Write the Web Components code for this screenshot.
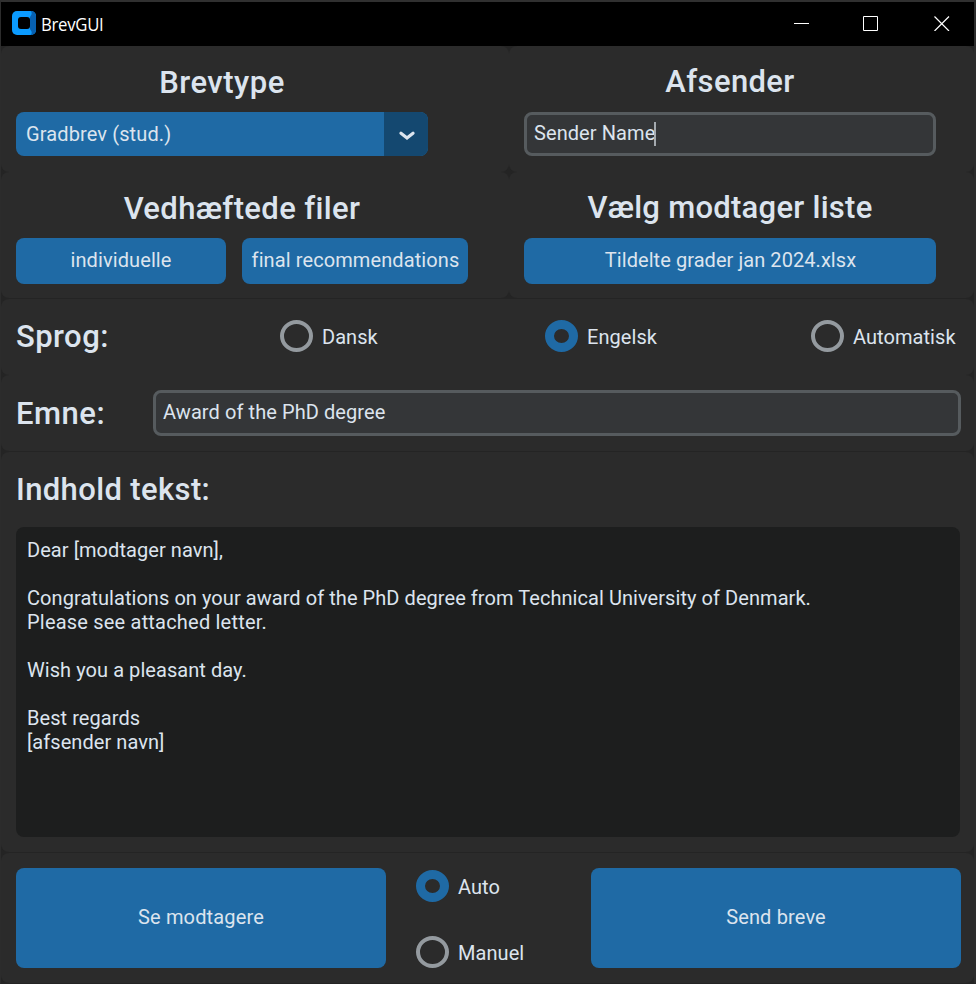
<!DOCTYPE html>
<html lang="da">
<head>
<meta charset="utf-8">
<title>BrevGUI</title>
<style>
html,body{margin:0;height:100%;background:#242424}
body{font-family:Roboto,"Liberation Sans",sans-serif;font-size:20px;line-height:24px;letter-spacing:.06px;color:#dce4ee;overflow:hidden}
.pair{display:grid;grid-template-columns:508px 465px}
.stack{display:flex;flex-direction:column;align-items:center;width:412px}
.files{display:grid;grid-template-columns:210px 226px;column-gap:16px}
</style>
</head>
<body>
<app-window>
  <title-bar slot="title">BrevGUI</title-bar>
  <div class="pair">
    <form-panel style="height:126px;--pad:17px 15px 0">
      <div class="stack">
        <form-heading style="--h:49px;--y:2px;--track:.5px">Brevtype</form-heading>
        <option-menu>Gradbrev (stud.)</option-menu>
      </div>
    </form-panel>
    <form-panel style="height:126px;--pad:17px 15px 0">
      <div class="stack">
        <form-heading style="--h:49px;--y:1px">Afsender</form-heading>
        <text-entry caret style="width:412px;height:44px">Sender Name</text-entry>
      </div>
    </form-panel>
    <form-panel style="height:126px;--pad:17px 15px 0">
      <div class="stack" style="width:452px">
        <form-heading style="--h:49px;--y:2px">Vedhæftede filer</form-heading>
        <div class="files">
          <push-button style="height:46px;--track:.1px">individuelle</push-button>
          <push-button style="height:46px;--track:.1px;padding-left:1px">final recommendations</push-button>
        </div>
      </div>
    </form-panel>
    <form-panel style="height:126px;--pad:17px 15px 0">
      <div class="stack">
        <form-heading style="--h:49px;--y:1px;--track:.27px">Vælg modtager liste</form-heading>
        <push-button style="width:412px;height:46px;padding-left:1px">Tildelte grader jan 2024.xlsx</push-button>
      </div>
    </form-panel>
  </div>
  <form-panel style="height:76px;margin-top:1px;--pad:0 15px 2px;--cols:264px 265px 266px auto;--align:center">
    <form-heading style="--track:.45px;--y:1px">Sprog:</form-heading>
    <radio-option>Dansk</radio-option>
    <radio-option checked>Engelsk</radio-option>
    <radio-option>Automatisk</radio-option>
  </form-panel>
  <form-panel style="height:76px;--pad:0 14px 0 15px;--cols:137px 808px;--align:center">
    <form-heading style="--track:.5px;--y:1px">Emne:</form-heading>
    <text-entry style="height:46px">Award of the PhD degree</text-entry>
  </form-panel>
  <form-panel style="height:400px;margin-top:1px;--pad:0 15px">
    <form-heading style="--h:75px;--v:center">Indhold tekst:</form-heading>
    <text-area>Dear [modtager navn],

Congratulations on your award of the PhD degree from Technical University of Denmark.
<span style="letter-spacing:.2px">Please see attached letter.</span>

Wish you a pleasant day.

Best regards
[afsender navn]</text-area>
  </form-panel>
  <form-panel style="height:130px;margin-top:1px;--pad:15px 14px 15px 15px;--cols:400px 175px 370px">
    <push-button style="width:370px;height:100px;--track:.15px">Se modtagere</push-button>
    <div style="display:flex;flex-direction:column;gap:34px;padding-top:2px">
      <radio-option checked>Auto</radio-option>
      <radio-option>Manuel</radio-option>
    </div>
    <push-button style="height:100px;--track:.15px">Send breve</push-button>
  </form-panel>
</app-window>
<script>
const define = (name, html) => customElements.define(name, class extends HTMLElement {
  constructor() {
    super();
    this.attachShadow({ mode: 'open' }).innerHTML = html;
  }
});

define('app-window', `<style>
:host{display:block;box-sizing:border-box;width:976px;height:984px;border-style:solid;border-width:2px 2px 1px 1px;border-color:#303030 #2c2c2c #242424 #2c2c2c;background:#242424}
</style><slot name="title"></slot><slot></slot>`);

define('title-bar', `<style>
:host{display:flex;align-items:center;height:44px;background:#000;color:#fff;font:18px/24px "Open Sans","Noto Sans",sans-serif}
.logo{margin:0 5px 2px 11px}
.name{flex:1;letter-spacing:-.3px;padding-bottom:1px;transform-origin:0 50%;transform:scaleX(.93)}
.controls{display:flex;margin:0 24px 3px 0}
.controls svg+svg{margin-left:53px}
.controls svg+svg+svg{margin-left:55px}
svg{display:block}
</style>
<svg class="logo" width="24" height="24" viewBox="0 0 24 24"><rect width="24" height="24" rx="5" fill="#0b9bff"/><path d="M18.500 0h.5a5 5 0 0 1 5 5v14a5 5 0 0 1-5 5h-.5c1-1 1.500-2 1-3.500L18 18V6l1.500-2.500c.5-1.500 0-2.500-1-3.500z" fill="#0760b0"/><rect x="6" y="6" width="12" height="12" rx="3"/></svg>
<span class="name"><slot></slot></span>
<div class="controls">
<svg width="16" height="16" viewBox="0 0 16 16"><path d="M0 8.500h15" stroke="#fff"/></svg>
<svg width="16" height="16" viewBox="0 0 16 16"><path d="M.5 1.500h14v14H.5z" fill="none" stroke="#fff"/></svg>
<svg width="16" height="16" viewBox="0 0 16 16"><path d="M.5 1.500l14.500 14.500M15 1.500L.5 16" stroke="#fff" stroke-width="1.200"/></svg>
</div>`);

define('form-panel', `<style>
:host{display:grid;box-sizing:border-box;border-radius:8px;background:#2b2b2b;padding:var(--pad);grid-template-columns:var(--cols,auto);align-items:var(--align,start);align-content:var(--align,start)}
</style><slot></slot>`);

define('form-heading', `<style>
:host{display:flex;height:var(--h,auto);font-size:31px;line-height:36px;font-weight:500;letter-spacing:var(--track,.37px);white-space:nowrap}
span{margin-top:var(--y,0);align-self:var(--v,flex-start)}
</style><span><slot></slot></span>`);

define('push-button', `<style>
:host{display:flex;align-items:center;justify-content:center;box-sizing:border-box;border-radius:8px;background:#1f6aa5;padding-bottom:2px;white-space:nowrap;letter-spacing:var(--track,.06px)}
</style><slot></slot>`);

define('option-menu', `<style>
:host{display:grid;grid-template-columns:368px 44px;width:412px;height:44px;border-radius:8px;overflow:hidden;background:#1f6aa5}
.value{padding:10px 0 0 10px;letter-spacing:.12px}
.arrow{display:grid;place-items:center;background:#144870}
svg{margin:3px 0 0 1px}
</style><div class="value"><slot></slot></div>
<div class="arrow"><svg width="16" height="10" viewBox="0 0 16 10"><path d="M2 2.300l6 4.700 6-4.700" fill="none" stroke="#dce4ee" stroke-width="3.200" stroke-linecap="round" stroke-linejoin="miter"/></svg></div>`);

define('text-entry', `<style>
:host{display:flex;align-items:center;box-sizing:border-box;border:3px solid #565b5e;border-radius:8px;background:#343638;padding:0 7px 2px;white-space:nowrap;letter-spacing:.08px}
i{display:none;width:2px;height:24px;background:#a4aaaf;margin:1px 0 0 -1px}
:host([caret]) i{display:block}
</style><span><slot></slot></span><i></i>`);

define('radio-option', `<style>
:host{display:flex;align-items:center;gap:9px;height:32px;white-space:nowrap}
i{box-sizing:border-box;width:33px;height:32px;border:4px solid #949a9f;border-radius:50%;flex:none}
:host([checked]) i{border:9px solid #1f6aa5}
span{padding-top:2px}
</style><i></i><span><slot></slot></span>`);

define('text-area', `<style>
:host{display:block;box-sizing:border-box;width:944px;height:310px;border-radius:8px;background:#1d1e1e;padding:11px;white-space:pre-wrap}
</style><slot></slot>`);
</script>
</body>
</html>
